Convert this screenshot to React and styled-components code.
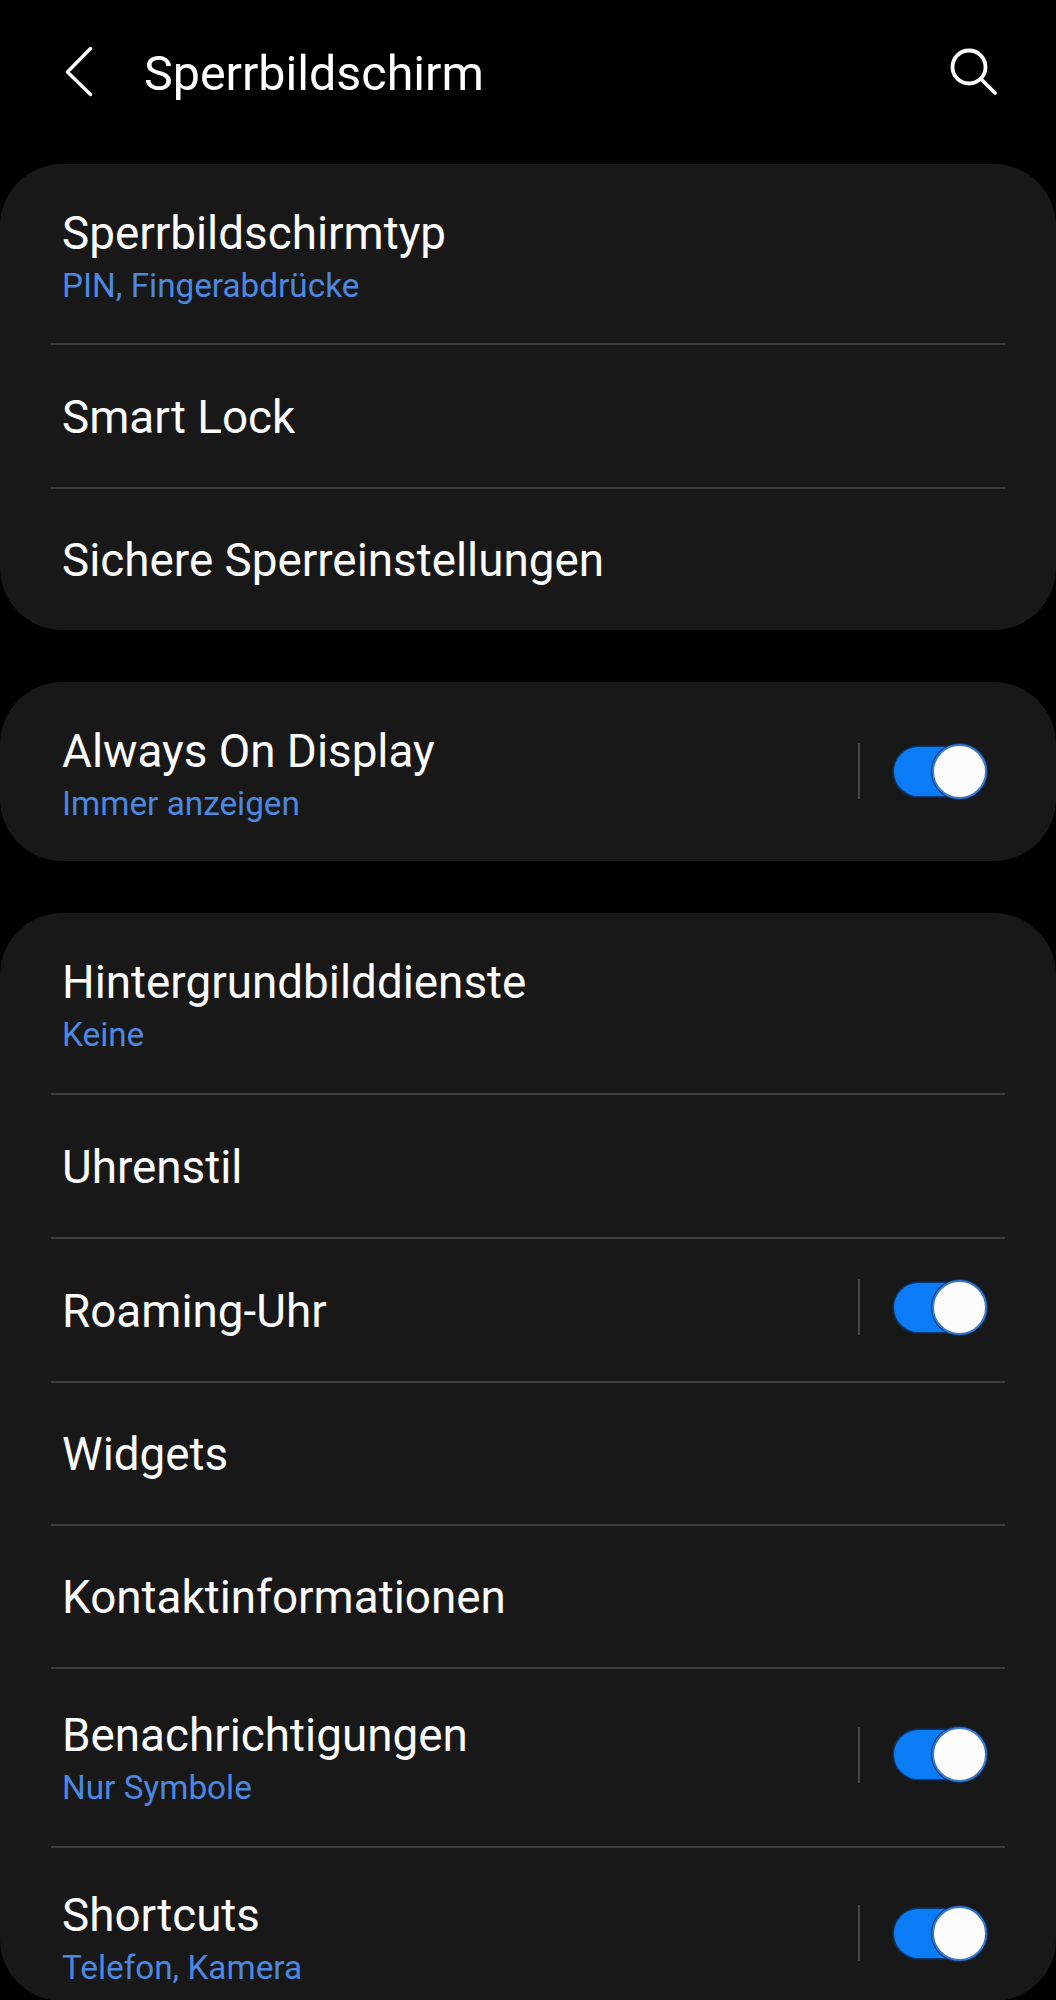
import React from "react";
import styled, { createGlobalStyle } from "styled-components";

const Global = createGlobalStyle`
  html, body { margin: 0; padding: 0; background: #000; }
  body { font-family: Roboto, "Liberation Sans", sans-serif; }
`;

const Page = styled.div`
  width: 1056px;
  height: 2000px;
  overflow: hidden;
  background: #000;
  color: #fff;
  display: flex;
  flex-direction: column;
`;

const Header = styled.header`
  height: 164px;
  flex: none;
  display: flex;
  align-items: flex-start;
  padding: 46px 58px 0 64px;
  box-sizing: border-box;
`;

const BackIcon = styled.svg`
  width: 30px;
  height: 52px;
  flex: none;
  stroke: #fff;
  stroke-width: 3.4;
  fill: none;
  stroke-linecap: round;
  stroke-linejoin: round;
`;

const Title = styled.h1`
  margin: 1px 0 0 50px;
  flex: 1;
  font-size: 48.4px;
  line-height: 54px;
  font-weight: 400;
`;

const SearchIcon = styled.svg`
  width: 50px;
  height: 50px;
  flex: none;
  margin-top: -1px;
  stroke: #fff;
  stroke-width: 3.8;
  fill: none;
  stroke-linecap: round;
`;

const Stack = styled.main`
  display: flex;
  flex-direction: column;
  gap: 52px;
`;

const Card = styled.section`
  background: #181818;
  border-radius: 62px;
  padding: 0 51px;
  height: ${(p) => (p.$height ? `${p.$height}px` : "auto")};
  overflow: hidden;
`;

const Row = styled.div`
  height: ${(p) => p.$height}px;
  box-sizing: border-box;
  display: flex;
  align-items: center;
  padding-left: 11px;
  border-bottom: ${(p) => (p.$last ? "none" : "2px solid #3d3d3d")};
`;

const Texts = styled.div`
  flex: 1;
  min-width: 0;
  padding-top: ${(p) => p.$nudge}px;
`;

const Name = styled.div`
  font-size: 45.8px;
  line-height: 50px;
  font-weight: 400;
  color: #fbfbfb;
`;

const Sub = styled.div`
  font-size: 33.3px;
  line-height: 38px;
  margin-top: 8px;
  color: #4c88e0;
`;

const ToggleArea = styled.div`
  flex: none;
  display: flex;
  align-items: center;
  margin-right: 20px;
  margin-bottom: ${(p) => p.$lift || 0}px;
`;

const Rule = styled.span`
  width: 2px;
  height: 56px;
  background: #454545;
  margin-right: 34px;
`;

const Track = styled.span`
  position: relative;
  display: block;
  width: 91px;
  height: 49px;
  border-radius: 25px;
  background: #0a7cf5;
  box-shadow: 0 0 0 1.5px #06356f;
`;

const Thumb = styled.span`
  position: absolute;
  right: -2px;
  top: -3px;
  width: 55px;
  height: 55px;
  box-sizing: border-box;
  border-radius: 50%;
  background: #fcfcfc;
  border: 2px solid #3c78c4;
  box-shadow: 0 0 0 1px #06356f;
`;

function Toggle({ lift }) {
  return (
    <ToggleArea $lift={lift}>
      <Rule />
      <Track>
        <Thumb />
      </Track>
    </ToggleArea>
  );
}

function Item({ name, sub, toggle, height, last, lift, nudge }) {
  return (
    <Row $height={height} $last={last}>
      <Texts $nudge={nudge ?? (sub ? 6 : 3)}>
        <Name>{name}</Name>
        {sub && <Sub>{sub}</Sub>}
      </Texts>
      {toggle && <Toggle lift={lift} />}
    </Row>
  );
}

export default function App() {
  return (
    <Page>
      <Global />
      <Header>
        <BackIcon viewBox="0 0 30 52" aria-label="Zurück">
          <path d="M26.5 2.5 L3.5 26 L26.5 48.5" />
        </BackIcon>
        <Title>Sperrbildschirm</Title>
        <SearchIcon viewBox="0 0 50 50" aria-label="Suchen">
          <circle cx="21" cy="22" r="16.5" />
          <path d="M34 35 L47 48" />
        </SearchIcon>
      </Header>
      <Stack>
        <Card>
          <Item height={181} name="Sperrbildschirmtyp" sub="PIN, Fingerabdrücke" nudge={7} />
          <Item height={144} name="Smart Lock" />
          <Item height={141} name="Sichere Sperreinstellungen" last />
        </Card>
        <Card>
          <Item height={179} name="Always On Display" sub="Immer anzeigen" toggle last lift={1} />
        </Card>
        <Card $height={1088}>
          <Item height={182} name="Hintergrundbilddienste" sub="Keine" nudge={5} />
          <Item height={144} name="Uhrenstil" />
          <Item height={144} name="Roaming-Uhr" toggle lift={6} />
          <Item height={143} name="Widgets" />
          <Item height={143} name="Kontaktinformationen" />
          <Item height={179} name="Benachrichtigungen" sub="Nur Symbole" toggle lift={6} nudge={2} />
          <Item height={180} name="Shortcuts" sub="Telefon, Kamera" toggle last lift={10} nudge={1} />
        </Card>
      </Stack>
    </Page>
  );
}
